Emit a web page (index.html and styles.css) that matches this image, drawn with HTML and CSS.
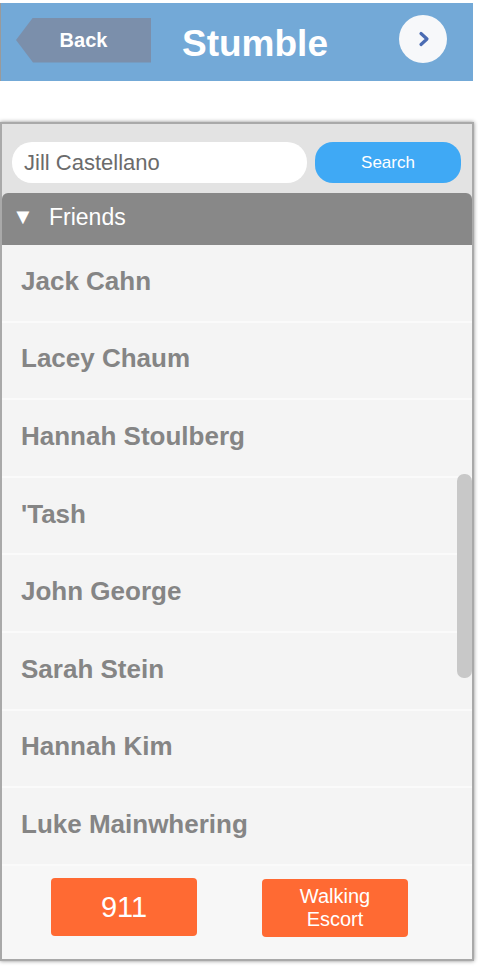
FILE: index.html
```html
<!DOCTYPE html>
<html>
<head>
<meta charset="utf-8">
<link rel="stylesheet" href="styles.css">
</head>
<body>
<header class="topbar">
  <div class="back"><span>Back</span></div>
  <h1 class="title">Stumble</h1>
  <div class="next">
    <svg width="14" height="16" viewBox="0 0 14 16"><path d="M4 2.5 L10 8 L4 13.5" fill="none" stroke="#4b6cb3" stroke-width="3.2" stroke-linecap="round" stroke-linejoin="round"/></svg>
  </div>
</header>
<section class="panel">
  <div class="search-row">
    <div class="search-input">Jill Castellano</div>
    <div class="search-btn">Search</div>
  </div>
  <div class="group-head"><span class="tri">&#9660;</span><span>Friends</span></div>
  <div class="list">
    <div class="item">Jack Cahn</div>
    <div class="item">Lacey Chaum</div>
    <div class="item">Hannah Stoulberg</div>
    <div class="item">'Tash</div>
    <div class="item">John George</div>
    <div class="item">Sarah Stein</div>
    <div class="item">Hannah Kim</div>
    <div class="item">Luke Mainwhering</div>
    <div class="scrollbar"></div>
  </div>
  <div class="footer">
    <div class="btn btn-911">911</div>
    <div class="btn btn-walk">Walking<br>Escort</div>
  </div>
</section>
</body>
</html>
```
FILE: styles.css
```css
* { box-sizing: border-box; }
html, body { margin: 0; padding: 0; background: #fff; }
body {
  width: 478px;
  height: 968px;
  font-family: "Liberation Sans", Arial, sans-serif;
  overflow: hidden;
}
.topbar {
  margin-top: 3px;
  width: 473px;
  height: 78px;
  background: #73a9d7;
  border-left: 1px solid #9a9a9a;
  display: flex;
  align-items: center;
  padding-left: 15px;
}
.back {
  width: 135px;
  height: 45px;
  background: #7b8fab;
  clip-path: polygon(0 50%, 17px 0, 100% 0, 100% 100%, 17px 100%);
  display: flex;
  align-items: center;
  justify-content: center;
  color: #fff;
  font-weight: bold;
  font-size: 20px;
  margin-top: -4px;
}
.title {
  margin: 0 0 0 31px;
  color: #fff;
  font-size: 37px;
  font-weight: bold;
  line-height: 1;
  margin-top: 3px;
}
.next {
  margin-left: auto;
  margin-right: 26px;
  width: 48px;
  height: 48px;
  border-radius: 50%;
  background: #f7f8fa;
  display: flex;
  align-items: center;
  justify-content: center;
  margin-top: -6px;
}
.next svg { margin-left: 2px; }
.panel {
  margin-top: 41px;
  width: 474px;
  border: 2px solid #a9a9a9;
  box-shadow: 0 0 4px rgba(0,0,0,0.45);
  background: #e3e3e3;
  position: relative;
}
.search-row {
  display: flex;
  padding: 18px 9px 10px 10px;
  gap: 8px;
}
.search-input {
  width: 295px;
  height: 41px;
  background: #fff;
  border-radius: 20px;
  color: #6b6b6b;
  font-size: 22px;
  line-height: 41px;
  padding-left: 12px;
}
.search-btn {
  width: 146px;
  height: 41px;
  background: #3fa9f5;
  border-radius: 18px;
  color: #fff;
  font-size: 17px;
  display: flex;
  align-items: center;
  justify-content: center;
}
.group-head {
  height: 52px;
  background: #888;
  border-radius: 6px 6px 0 0;
  display: flex;
  align-items: center;
  color: #fff;
  font-size: 23px;
  padding-left: 10px;
  padding-bottom: 4px;
}
.tri { font-size: 22px; width: 37px; }
.list {
  position: relative;
  background: #f4f4f4;
}
.item {
  height: 77.6px;
  border-bottom: 2px solid #fafafa;
  display: flex;
  align-items: center;
  padding-left: 19px;
  padding-bottom: 3px;
  color: #858585;
  font-weight: bold;
  font-size: 26px;
}
.scrollbar {
  position: absolute;
  right: 0;
  top: 229px;
  width: 15px;
  height: 204px;
  border-radius: 7px;
  background: #c8c8c8;
}
.footer {
  background: #f7f7f7;
  height: 93px;
  display: flex;
  padding: 12px 0 0 49px;
  gap: 65px;
}
.btn {
  width: 146px;
  height: 58px;
  background: #ff6a33;
  border-radius: 4px;
  color: #fff;
  display: flex;
  align-items: center;
  justify-content: center;
  text-align: center;
}
.btn-911 { font-size: 29px; padding-top: 2px; }
.btn-walk { font-size: 20px; line-height: 23px; margin-top: 1px; }
```
